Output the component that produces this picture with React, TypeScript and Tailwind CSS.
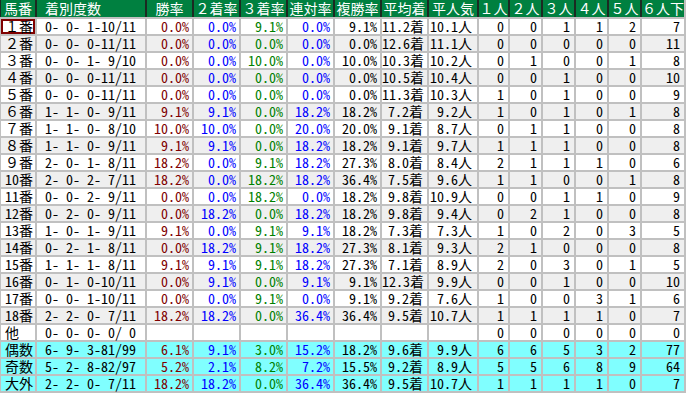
import React from "react";

type Row = {
  label: string;
  rec: string;
  rates: string[];
  avg: string;
  pop: string;
  counts: string[];
  kind: "w" | "g" | "c";
  selected?: boolean;
};

const rows: Row[] = [
  { label: "１番", rec: "0- 0- 1-10/11", rates: ["0.0%", "0.0%", "9.1%", "0.0%", "9.1%"], avg: "11.2着", pop: "10.1人", counts: ["0", "0", "1", "1", "2", "7"], kind: "w", selected: true },
  { label: "２番", rec: "0- 0- 0-11/11", rates: ["0.0%", "0.0%", "0.0%", "0.0%", "0.0%"], avg: "12.6着", pop: "11.1人", counts: ["0", "0", "0", "0", "0", "11"], kind: "g" },
  { label: "３番", rec: "0- 0- 1- 9/10", rates: ["0.0%", "0.0%", "10.0%", "0.0%", "10.0%"], avg: "10.3着", pop: "10.2人", counts: ["0", "1", "0", "0", "1", "8"], kind: "w" },
  { label: "４番", rec: "0- 0- 0-11/11", rates: ["0.0%", "0.0%", "0.0%", "0.0%", "0.0%"], avg: "10.5着", pop: "10.4人", counts: ["0", "0", "1", "0", "0", "10"], kind: "g" },
  { label: "５番", rec: "0- 0- 0-11/11", rates: ["0.0%", "0.0%", "0.0%", "0.0%", "0.0%"], avg: "11.3着", pop: "10.3人", counts: ["1", "0", "1", "0", "0", "9"], kind: "w" },
  { label: "６番", rec: "1- 1- 0- 9/11", rates: ["9.1%", "9.1%", "0.0%", "18.2%", "18.2%"], avg: "7.2着", pop: "9.2人", counts: ["1", "0", "1", "0", "1", "8"], kind: "g" },
  { label: "７番", rec: "1- 1- 0- 8/10", rates: ["10.0%", "10.0%", "0.0%", "20.0%", "20.0%"], avg: "9.1着", pop: "8.7人", counts: ["0", "1", "1", "0", "0", "8"], kind: "w" },
  { label: "８番", rec: "1- 1- 0- 9/11", rates: ["9.1%", "9.1%", "0.0%", "18.2%", "18.2%"], avg: "9.1着", pop: "9.7人", counts: ["1", "1", "1", "0", "0", "8"], kind: "g" },
  { label: "９番", rec: "2- 0- 1- 8/11", rates: ["18.2%", "0.0%", "9.1%", "18.2%", "27.3%"], avg: "8.0着", pop: "8.4人", counts: ["2", "1", "1", "1", "0", "6"], kind: "w" },
  { label: "10番", rec: "2- 0- 2- 7/11", rates: ["18.2%", "0.0%", "18.2%", "18.2%", "36.4%"], avg: "7.5着", pop: "9.6人", counts: ["1", "1", "0", "0", "1", "8"], kind: "g" },
  { label: "11番", rec: "0- 0- 2- 9/11", rates: ["0.0%", "0.0%", "18.2%", "0.0%", "18.2%"], avg: "9.8着", pop: "10.9人", counts: ["0", "0", "1", "1", "0", "9"], kind: "w" },
  { label: "12番", rec: "0- 2- 0- 9/11", rates: ["0.0%", "18.2%", "0.0%", "18.2%", "18.2%"], avg: "9.8着", pop: "9.4人", counts: ["0", "2", "1", "0", "0", "8"], kind: "g" },
  { label: "13番", rec: "1- 0- 1- 9/11", rates: ["9.1%", "0.0%", "9.1%", "9.1%", "18.2%"], avg: "7.3着", pop: "7.3人", counts: ["1", "0", "2", "0", "3", "5"], kind: "w" },
  { label: "14番", rec: "0- 2- 1- 8/11", rates: ["0.0%", "18.2%", "9.1%", "18.2%", "27.3%"], avg: "8.1着", pop: "9.3人", counts: ["2", "1", "0", "0", "0", "8"], kind: "g" },
  { label: "15番", rec: "1- 1- 1- 8/11", rates: ["9.1%", "9.1%", "9.1%", "18.2%", "27.3%"], avg: "7.1着", pop: "8.9人", counts: ["2", "0", "3", "0", "1", "5"], kind: "w" },
  { label: "16番", rec: "0- 1- 0-10/11", rates: ["0.0%", "9.1%", "0.0%", "9.1%", "9.1%"], avg: "12.3着", pop: "9.9人", counts: ["0", "0", "1", "0", "0", "10"], kind: "g" },
  { label: "17番", rec: "0- 0- 1-10/11", rates: ["0.0%", "0.0%", "9.1%", "0.0%", "9.1%"], avg: "9.2着", pop: "7.6人", counts: ["1", "0", "0", "3", "1", "6"], kind: "w" },
  { label: "18番", rec: "2- 2- 0- 7/11", rates: ["18.2%", "18.2%", "0.0%", "36.4%", "36.4%"], avg: "9.5着", pop: "10.7人", counts: ["1", "1", "1", "1", "0", "7"], kind: "g" },
  { label: "他", rec: "0- 0- 0- 0/ 0", rates: ["", "", "", "", ""], avg: "", pop: "", counts: ["0", "0", "0", "0", "0", "0"], kind: "w" },
  { label: "偶数", rec: "6- 9- 3-81/99", rates: ["6.1%", "9.1%", "3.0%", "15.2%", "18.2%"], avg: "9.6着", pop: "9.9人", counts: ["6", "6", "5", "3", "2", "77"], kind: "c" },
  { label: "奇数", rec: "5- 2- 8-82/97", rates: ["5.2%", "2.1%", "8.2%", "7.2%", "15.5%"], avg: "9.2着", pop: "8.9人", counts: ["5", "5", "6", "8", "9", "64"], kind: "c" },
  { label: "大外", rec: "2- 2- 0- 7/11", rates: ["18.2%", "18.2%", "0.0%", "36.4%", "36.4%"], avg: "9.5着", pop: "10.7人", counts: ["1", "1", "1", "1", "0", "7"], kind: "c" },
];

const headers = ["馬番", "着別度数", "勝率", "２着率", "３着率", "連対率", "複勝率", "平均着", "平人気", "１人", "２人", "３人", "４人", "５人", "６人下"];

const gridCols =
  "grid grid-cols-[34px_108px_45px_45px_45px_45px_45px_45px_48px_29px_31px_31px_31px_31px_42px] gap-x-[2px]";

const rateColors = ["text-[#800000]", "text-[#0000ff]", "text-[#008000]", "text-[#0000ff]", "text-black"];

const hw = "[font-feature-settings:'hwid']";

function Label({ text }: { text: string }) {
  const m = text.match(/^([0-9]+)(.*)$/);
  if (m) {
    return (
      <>
        <span className={hw}>{m[1]}</span>
        {m[2]}
      </>
    );
  }
  return <>{text}</>;
}

export default function App() {
  return (
    <div className="w-[690px] h-[397px] bg-white overflow-hidden">
      <div className="w-[686px] bg-[#c0c0c0] pl-[1px] pb-[2px] pr-[2px] flex flex-col gap-y-[2px] text-[14px] leading-[15px] [font-family:'Noto_Sans_CJK_JP','Noto_Sans_CJK_SC',sans-serif] whitespace-pre">
        <div className={`${gridCols} bg-[#1c2a22] -ml-[1px] pl-[1px]`}>
          {headers.map((h, i) => (
            <div
              key={i}
              className={`h-[17px] bg-[#008040] text-white leading-[17px] ${i === 1 ? "pl-[8px] text-left" : "text-center"}`}
            >
              {h}
            </div>
          ))}
        </div>
        {rows.map((r, ri) => {
          const bg = r.kind === "c" ? "bg-[#80ffff]" : r.kind === "g" ? "bg-[#efefef]" : "bg-white";
          return (
            <div key={ri} className={`${gridCols} h-[15px]`}>
              <div className={`${bg} pl-[4px] text-black ${r.selected ? "ring-2 ring-inset ring-[#800000]" : ""}`}>
                <Label text={r.label} />
              </div>
              <div className={`${bg} ${hw} pl-[8px] text-black`}>{r.rec}</div>
              {r.rates.map((v, i) => (
                <div key={i} className={`${bg} ${hw} pr-[3px] text-right ${rateColors[i]}`}>
                  {v}
                </div>
              ))}
              <div className={`${bg} ${hw} pr-[4px] text-right text-black`}>{r.avg}</div>
              <div className={`${bg} ${hw} pr-[5px] text-right text-black`}>{r.pop}</div>
              {r.counts.map((v, i) => (
                <div key={i} className={`${bg} ${hw} pr-[4px] text-right text-black`}>
                  {v}
                </div>
              ))}
            </div>
          );
        })}
      </div>
    </div>
  );
}
